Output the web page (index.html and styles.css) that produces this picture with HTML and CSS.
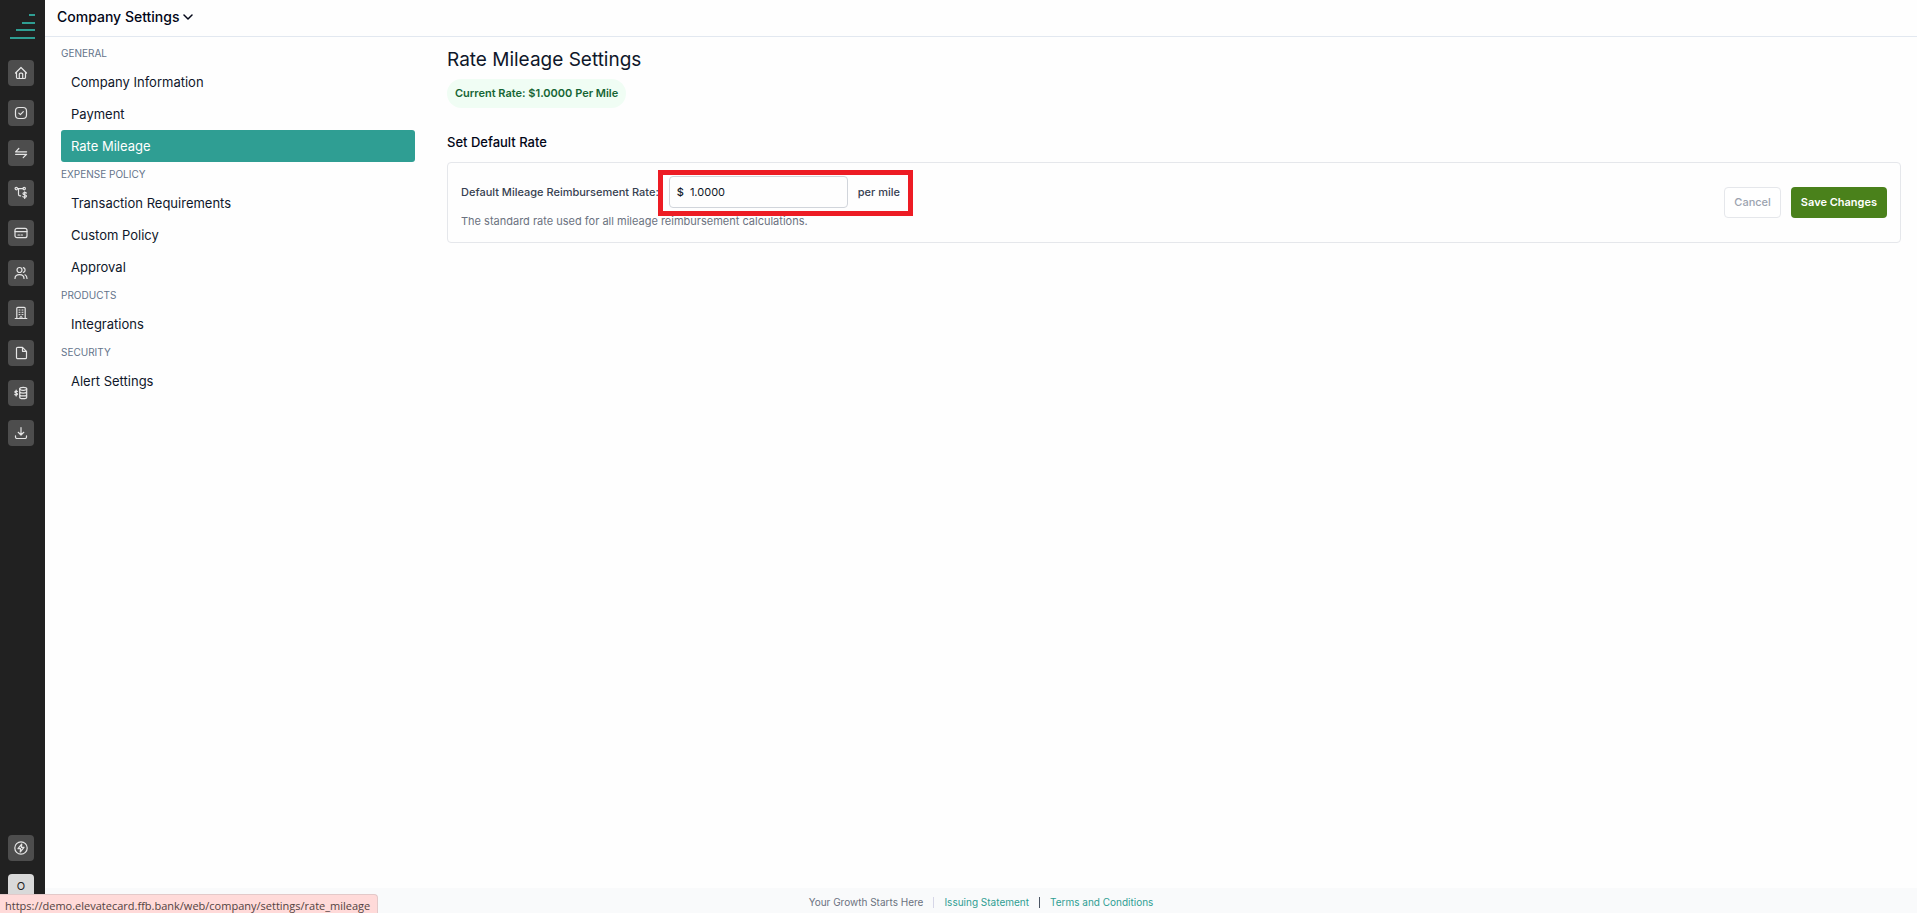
FILE: index.html
```
<!DOCTYPE html>
<html lang="en">
<head>
    <meta charset="UTF-8">
    <meta name="viewport" content="width=device-width, initial-scale=1.0">
    <title>Company Settings</title>
    <link rel="stylesheet" href="styles.css">
</head>
<body>

    <aside class="sidebar">
        <a href="#" class="logo" aria-label="Elevate">
            <svg viewBox="0 0 25 26" width="25" height="26">
                <path d="M19 2h6M12 10h13M6 17h19M0 25h25" />
            </svg>
        </a>
        <nav class="side-icons">
            <a href="#" class="icon-btn" aria-label="Home">
                <svg viewBox="0 0 14 14"><path d="M1.500 7L7 1.500 12.500 7M2.500 6v5.200a1.300 1.300 0 0 0 1.300 1.300h6.400a1.300 1.300 0 0 0 1.300-1.300V6M5.300 12.300V8.200a1 1 0 0 1 1-1h1.400a1 1 0 0 1 1 1v4.100" /></svg>
            </a>
            <a href="#" class="icon-btn" aria-label="Tasks">
                <svg viewBox="0 0 14 14"><rect x="1.5" y="1.5" width="11" height="11" rx="3.5" /><path d="M4.8 7.1l1.600 1.500 2.900-3" /></svg>
            </a>
            <a href="#" class="icon-btn" aria-label="Transactions">
                <svg viewBox="0 0 14 14"><path d="M4.800 2.500L1.600 5.800h11M1.600 8.300h11L9.200 11.600" /></svg>
            </a>
            <a href="#" class="icon-btn" aria-label="Reimbursements">
                <svg viewBox="0 0 14 14"><circle cx="2.300" cy="2.600" r="1.200" /><circle cx="10.200" cy="2.600" r="1.200" /><path d="M3.500 2.600H9M4.500 2.800v5.400a1.600 1.600 0 0 0 1.600 1.600h.600M12.300 7c-.8-.8-3.300-.8-3.300.7 0 1.600 3.500.8 3.500 2.400 0 1.500-2.800 1.500-3.700.6M10.700 5.800v6.600" /></svg>
            </a>
            <a href="#" class="icon-btn" aria-label="Cards">
                <svg viewBox="0 0 14 14"><rect x="1" y="2.300" width="12" height="9.400" rx="2" /><path d="M1 5.600h12M4 9h1.500M7 9h1.500" /></svg>
            </a>
            <a href="#" class="icon-btn" aria-label="Users">
                <svg viewBox="0 0 14 14"><circle cx="5.500" cy="4" r="2.500" /><path d="M1 12.500c0-5.300 9-5.300 9 0M9.300 1.600a2.500 2.500 0 0 1 0 4.800M11 8.800c1.400.7 2 2 2 3.700" /></svg>
            </a>
            <a href="#" class="icon-btn" aria-label="Company">
                <svg viewBox="0 0 14 14"><path d="M1.200 12.500h11.600M2.800 12.500V2.300a1 1 0 0 1 1-1h6.400a1 1 0 0 1 1 1v10.200" /><path class="dots" d="M5 4h1M8 4h1M5 6.300h1M8 6.300h1M5 8.600h1M8 8.600h1M6 12.300v-1.500h2v1.500" /></svg>
            </a>
            <a href="#" class="icon-btn" aria-label="Documents">
                <svg viewBox="0 0 14 14"><path d="M8.500 1.300H3.800a1.300 1.300 0 0 0-1.300 1.300v8.800a1.300 1.300 0 0 0 1.300 1.300h7.400a1.300 1.300 0 0 0 1.300-1.300V5.300zM8.500 1.300v4h4" /></svg>
            </a>
            <a href="#" class="icon-btn" aria-label="Funds">
                <svg viewBox="0 0 14 14"><path d="M3.400 5.400C2.500 4.800.9 5 .9 6c0 1.300 2.600.7 2.600 2 0 1.100-1.800 1.200-2.700.5M2.200 4v6" /><ellipse cx="9.200" cy="2.800" rx="3.500" ry="1.500" /><path d="M5.700 2.800v8.400c0 2 7 2 7 0V2.800M5.700 5.600c0 2 7 2 7 0M5.700 8.400c0 2 7 2 7 0" /></svg>
            </a>
            <a href="#" class="icon-btn" aria-label="Downloads">
                <svg viewBox="0 0 14 14"><path d="M7 1.500v7.500M4.200 6.300L7 9l2.800-2.700M1.500 9.800v1.200a1.500 1.500 0 0 0 1.500 1.500h8a1.500 1.500 0 0 0 1.500-1.500V9.800" /></svg>
            </a>
        </nav>
        <div class="side-bottom">
            <button type="button" class="icon-btn" aria-label="Quick actions">
                <svg viewBox="0 0 14 14"><circle cx="7" cy="7" r="6.200" /><path d="M7.800 3L4 7.700h2.600L6.200 11 10 6.300H7.400z" /></svg>
            </button>
            <button type="button" class="avatar">O</button>
        </div>
    </aside>

    <div class="page">
        <header class="topbar">
            <button type="button" class="page-menu">
                Company Settings
                <svg viewBox="0 0 10 6" width="10" height="6"><path d="M1 1l4 4 4-4" /></svg>
            </button>
        </header>

        <div class="content">
            <nav class="settings-nav">
                <h2>General</h2>
                <a href="#">Company Information</a>
                <a href="#">Payment</a>
                <a href="#" class="active">Rate Mileage</a>
                <h2>Expense Policy</h2>
                <a href="#">Transaction Requirements</a>
                <a href="#">Custom Policy</a>
                <a href="#">Approval</a>
                <h2>Products</h2>
                <a href="#">Integrations</a>
                <h2>Security</h2>
                <a href="#">Alert Settings</a>
            </nav>

            <main class="settings">
                <h1>Rate Mileage Settings</h1>
                <span class="badge">Current Rate: $1.0000 Per Mile</span>

                <h3>Set Default Rate</h3>
                <form class="rate-card">
                    <div class="rate-fields">
                        <div class="rate-row">
                            <label for="rate">Default Mileage Reimbursement Rate:</label>
                            <div class="rate-value">
                                <div class="rate-input">
                                    <span>$</span>
                                    <input type="text" id="rate" value="1.0000">
                                </div>
                                <span>per mile</span>
                            </div>
                        </div>
                        <p class="hint">The standard rate used for all mileage reimbursement calculations.</p>
                    </div>
                    <div class="rate-actions">
                        <button type="button" class="btn cancel">Cancel</button>
                        <button type="submit" class="btn save">Save Changes</button>
                    </div>
                </form>
            </main>
        </div>

        <footer class="footer">
            <span>Your Growth Starts Here</span>
            <span class="divider"></span>
            <a href="#">Issuing Statement</a>
            <span class="divider dark"></span>
            <a href="#">Terms and Conditions</a>
        </footer>
    </div>

    <div class="status-url">https://demo.elevatecard.ffb.bank/web/company/settings/rate_mileage</div>

</body>
</html>
```
FILE: styles.css
```
* {
    box-sizing: border-box;
}

body {
    margin: 0;
    display: flex;
    height: 100vh;
    overflow: hidden;
    font-family: Inter, 'Liberation Sans', sans-serif;
    font-size: 11px;
    color: #0f172a;
    background-color: #fefefe;
}

h1, h2, h3, p {
    margin: 0;
}

a {
    text-decoration: none;
    color: inherit;
}

button, input {
    font-family: inherit;
    cursor: pointer;
}

svg {
    fill: none;
    stroke: currentColor;
    stroke-linecap: round;
    stroke-linejoin: round;
}

/* Sidebar */
.sidebar {
    flex: 0 0 45px;
    display: flex;
    flex-direction: column;
    padding: 13px 8px 0;
    background-color: #212121;
}

.logo {
    display: block;
    height: 26px;
    margin: 0 0 21px 2px;
    color: #2f9e93;
}

.logo svg {
    display: block;
    stroke-width: 2;
    stroke-linecap: butt;
}

.side-icons {
    display: flex;
    flex-direction: column;
    gap: 14px;
}

.icon-btn, .avatar {
    display: flex;
    align-items: center;
    justify-content: center;
    width: 26px;
    height: 26px;
    padding: 0;
    border: none;
    border-radius: 4px;
    background-color: #4d4d4d;
    color: #e5e5e5;
}

.icon-btn svg {
    width: 14px;
    height: 14px;
    stroke-width: 1.2;
}

.icon-btn .dots {
    stroke-width: 1;
}

.side-bottom {
    display: flex;
    flex-direction: column;
    gap: 13px;
    margin-top: auto;
}

.avatar {
    background-color: #d9d9d9;
    color: #212121;
    font-size: 11px;
    line-height: 24px;
    align-items: flex-start;
    margin-bottom: 13px;
}

/* Page */
.page {
    flex: 1;
    display: flex;
    flex-direction: column;
    min-width: 0;
}

.topbar {
    height: 37px;
    padding: 5px 12px;
    border-bottom: 1px solid #e2e8f0;
}

.page-menu {
    display: flex;
    align-items: center;
    gap: 4px;
    padding: 0;
    border: none;
    background: none;
    color: #020617;
    font-size: 14px;
    font-weight: 500;
    line-height: 24px;
}

.page-menu svg {
    stroke-width: 1.5;
}

.content {
    flex: 1;
    display: flex;
    gap: 32px;
    padding: 4px 16px;
}

.settings-nav {
    flex: 0 0 354px;
}

.settings-nav h2 {
    padding: 4px 0 5px;
    font-size: 10px;
    font-weight: 400;
    line-height: 16px;
    text-transform: uppercase;
    color: #64748b;
}

.settings-nav a {
    display: block;
    padding: 6px 10px;
    border-radius: 3px;
    font-size: 13px;
    line-height: 20px;
}

.settings-nav a.active {
    background-color: #2f9e93;
    color: #fff;
}

/* Settings panel */
.settings {
    flex: 1;
    display: flex;
    flex-direction: column;
    align-items: flex-start;
    padding-top: 4px;
}

.settings h1 {
    font-size: 19px;
    font-weight: 400;
    line-height: 30px;
}

.settings h3 {
    margin: 24px 0 10px;
    font-size: 13px;
    font-weight: 500;
    line-height: 20px;
    color: #020617;
}

.badge {
    margin-top: 4px;
    padding: 6px 8px;
    border-radius: 15px;
    background-color: #f0fdf4;
    color: #166534;
    font-weight: 600;
    line-height: 17px;
}

.rate-card {
    align-self: stretch;
    display: flex;
    align-items: center;
    justify-content: space-between;
    padding: 13px;
    border: 1px solid #e5e7eb;
    border-radius: 4px;
}

.rate-row, .rate-value {
    display: flex;
    align-items: center;
    gap: 10px;
}

.rate-row {
    color: #374151;
    font-weight: 500;
}

.rate-value {
    position: relative;
}

/* red frame drawn around the rate value */
.rate-value::after {
    content: '';
    position: absolute;
    inset: -6px -13px -8px -11px;
    border: 5px solid #ed1c24;
    pointer-events: none;
}

.rate-input {
    display: flex;
    align-items: center;
    gap: 6px;
    width: 179px;
    height: 32px;
    padding: 0 7px;
    border: 1px solid #d1d5db;
    border-radius: 4px;
    color: #111827;
}

.rate-input input {
    flex: 1;
    min-width: 0;
    padding: 0;
    border: none;
    outline: none;
    background: none;
    color: inherit;
    font-size: 11px;
    cursor: text;
}

.hint {
    margin-top: 5px;
    line-height: 16px;
    color: #6b7280;
}

.rate-actions {
    display: flex;
    gap: 10px;
}

.btn {
    padding: 6px 9px;
    border: 1px solid transparent;
    border-radius: 4px;
    font-size: 11px;
    font-weight: 500;
    line-height: 17px;
}

.btn.cancel {
    border-color: #e5e7eb;
    background-color: #fff;
    color: #9ca3af;
}

.btn.save {
    background-color: #4a811b;
    color: #fff;
    font-weight: 600;
}

/* Footer */
.footer {
    display: flex;
    align-items: center;
    justify-content: center;
    gap: 10px;
    padding: 6px 0 3px;
    background-color: #f9fafb;
    color: #6b7280;
    font-size: 10px;
    line-height: 16px;
}

.footer a {
    color: #2f9e93;
}

.divider {
    width: 1px;
    height: 11px;
    background-color: #d6d6e7;
}

.divider.dark {
    background-color: #4b5563;
}

/* Link address shown in the bottom corner */
.status-url {
    position: fixed;
    left: 0;
    bottom: 0;
    padding: 3px 7px 0 5px;
    border: 1px solid #e3c9c9;
    border-width: 1px 1px 0 0;
    border-radius: 0 4px 0 0;
    background-color: #ffdad9;
    color: #534341;
    font-family: 'Open Sans', 'Noto Sans', sans-serif;
    font-size: 11px;
    line-height: 15px;
}
```
